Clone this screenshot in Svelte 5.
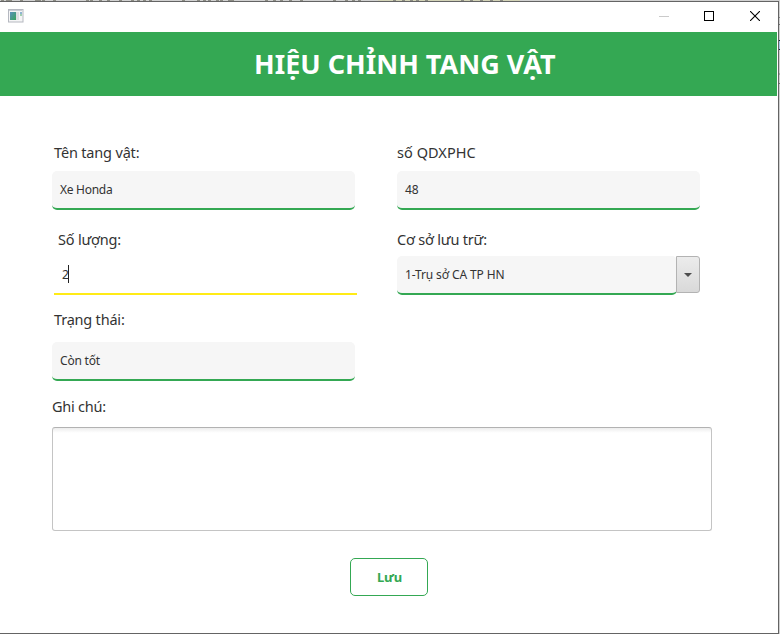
<script>
  let name = $state('Xe Honda');
  let decision = $state('48');
  let quantity = $state('2');
  let place = $state('1-Trụ sở CA TP HN');
  let status = $state('Còn tốt');
  const edgeMarks = [1, 6, 8, 9, 20, 35, 38, 42, 53, 86, 90, 99, 107, 119, 131, 137, 143, 149, 182, 197, 203, 208, 216, 220, 228, 231, 265, 273, 280, 289, 300, 333, 345, 352, 358, 393, 402, 410, 416, 425, 461, 470, 480, 490, 500];
</script>

<div class="screen">
  <svg class="behind-top" width="780" height="1" aria-hidden="true" shape-rendering="crispEdges">
    <rect width="780" height="1" fill="#d1d1d1" />
    <rect x="378" width="142" height="1" fill="#d3d3b7" />
    {#each edgeMarks as x}<rect {x} y="0" width="3" height="1" fill="#8c8c84" />{/each}
  </svg>
  <div class="middle">
    <div class="window">
      <header class="titlebar">
        <svg class="app" width="16" height="14" viewBox="0 0 16 14" aria-hidden="true">
          <defs>
            <linearGradient id="scene" x2="1" y2="1"><stop stop-color="#5b91bd" /><stop offset="1" stop-color="#39a45c" /></linearGradient>
          </defs>
          <rect x=".5" y=".5" width="14.5" height="12.5" fill="#f5f5f6" stroke="#b5b8c0" />
          <path d="M1 1.5h13" stroke="#c9ccd4" />
          <rect x="2" y="3" width="6" height="8" fill="url(#scene)" />
          <rect x="8" y="3" width="3" height="8" fill="#dedfe2" />
          <rect x="12" y="3" width="2" height="2" fill="#8eb4d0" />
          <rect x="12" y="5" width="2" height="2" fill="#9fceb0" />
        </svg>
        <div class="controls">
          <svg width="10" height="10" aria-hidden="true"><path d="M0 5.5h10" stroke="#cacaca" /></svg>
          <svg width="10" height="10" aria-hidden="true"><rect x=".5" y=".5" width="9" height="9" fill="none" stroke="#000" /></svg>
          <svg width="10" height="10" aria-hidden="true"><path d="M0 0l10 10M10 0L0 10" stroke="#000" stroke-width="1.1" /></svg>
        </div>
      </header>
      <div class="banner"><h1>HIỆU CHỈNH TANG VẬT</h1></div>
      <main>
        <div class="pair">
          <div class="cell">
            <div class="label in2"><span class="l1">Tên tang vật:</span></div>
            <div class="field"><span class="v1">{name}</span></div>
          </div>
          <div class="cell">
            <div class="label"><span class="l2">số QDXPHC</span></div>
            <div class="field"><span class="v2">{decision}</span></div>
          </div>
        </div>
        <div class="pair second">
          <div class="cell">
            <div class="label in6"><span class="l3">Số lượng:</span></div>
            <div class="field active"><span class="v3">{quantity}</span><i class="caret"></i></div>
          </div>
          <div class="cell">
            <div class="label"><span class="l4">Cơ sở lưu trữ:</span></div>
            <div class="combo">
              <div class="field"><span class="v4">{place}</span></div>
              <div class="arrow"><svg width="8" height="4" aria-hidden="true"><path d="M0 0h8L4 4z" fill="#4d4d4d" /></svg></div>
            </div>
          </div>
        </div>
        <div class="cell third">
          <div class="label in2"><span class="l5">Trạng thái:</span></div>
          <div class="field"><span class="v5">{status}</span></div>
        </div>
        <div class="label fourth"><span class="l6">Ghi chú:</span></div>
        <div class="note"></div>
        <button><span class="b1">Lưu</span></button>
      </main>
    </div>
    <svg class="behind-right" width="1" height="632" aria-hidden="true" shape-rendering="crispEdges">
      <rect width="1" height="632" fill="#d0d0d0" />
      <rect y="16" width="1" height="1" fill="#888" /><rect y="23" width="1" height="1" fill="#777" />
      <rect y="39" width="1" height="10" fill="#18253a" /><rect y="40" width="1" height="8" fill="#a9c8e8" />
      <rect y="72" width="1" height="2" fill="#aaa" /><rect y="82" width="1" height="1" fill="#777" />
    </svg>
  </div>
</div>

<style>
  :global(body) { background: #fff; }
  .screen { width: 780px; height: 634px; overflow: hidden; box-sizing: border-box; display: flex; flex-direction: column; font-family: "Noto Sans", "Open Sans", sans-serif; color: #333; }
  .behind-top { display: block; flex: none; }
  .middle { display: flex; height: 633px; background: #d0d0d0; }
  .window { width: 779px; height: 633px; box-sizing: border-box; border: solid #646464; border-width: 1px 1px 1px 0; background: #fff; }
  .behind-right { display: block; }
  .titlebar { height: 30px; display: flex; justify-content: space-between; padding: 0 18px 0 8px; box-sizing: border-box; }
  .app { margin-top: 7px; }
  .controls { display: flex; gap: 35px; padding-top: 9px; }
  .controls svg { display: block; }
  .controls svg:last-child { margin-left: 1px; }
  .banner { width: 777px; height: 64px; background: #34a853; color: #fff; box-sizing: border-box; padding-left: 254px; }
  h1 { margin: 0; font-size: 27px; line-height: 64px; font-weight: 700; white-space: nowrap; }
  main { padding: 46px 0 0 52px; }
  .pair { display: grid; grid-template-columns: 303px 303px; column-gap: 42px; }
  .cell { width: 303px; }
  .label { height: 22px; line-height: 20px; font-size: 14.5px; white-space: nowrap; }
  .l1 { letter-spacing: -.17px; }
  .l2 { letter-spacing: .05px; }
  .l3 { letter-spacing: -.2px; }
  .l4 { letter-spacing: -.2px; }
  .l5 { letter-spacing: -.2px; }
  .l6 { letter-spacing: -.25px; }
  .v1 { letter-spacing: -.28px; }
  .v3 { letter-spacing: -.9px; }
  .v4 { letter-spacing: -.12px; }
  .v5 { letter-spacing: -.2px; }
  .b1 { letter-spacing: -.2px; padding-left: 1px; }
  .in2 { padding-left: 2px; }
  .in6 { padding-left: 6px; }
  .field { margin-top: 7px; height: 39px; box-sizing: border-box; border-radius: 5px; border-bottom: 2px solid #34a853; background: #f6f6f6; padding: 0 8px; font-size: 12px; line-height: 38px; white-space: nowrap; display: flex; }
  .second { margin-top: 19px; }
  .second .label { height: 21px; line-height: 21px; }
  .second .field, .second .combo { margin-top: 6px; }
  .field.active { background: #fff; border-bottom-color: #ffeb16; border-radius: 0; margin-left: 2px; width: 303px; }
  .caret { width: 1px; height: 18px; background: #222; margin-top: 9px; }
  .combo { display: flex; height: 39px; }
  .second .combo .field { margin-top: 0; width: 280px; flex: none; }
  .arrow { width: 24px; height: 37px; margin-left: -1px; box-sizing: border-box; border: 1px solid #b3b3b3; border-radius: 0 3px 3px 0; background: linear-gradient(#ececec, #d9d9d9); display: flex; align-items: center; justify-content: center; }
  .third { margin-top: 14px; }
  .third .field { margin-top: 11px; }
  .fourth { margin-top: 15px; }
  .note { width: 660px; height: 104px; margin-top: 9px; box-sizing: border-box; border: 1px solid #c4c4c4; border-top-color: #b2b2b2; border-radius: 3px; background: linear-gradient(#ededed, #fff 5px); }
  button { display: block; width: 78px; height: 38px; margin: 27px 0 0 298px; padding: 0; border: 1px solid #34a853; border-radius: 5px; background: #fff; color: #34a853; font: 700 13px/36px "Noto Sans", sans-serif; }
</style>
